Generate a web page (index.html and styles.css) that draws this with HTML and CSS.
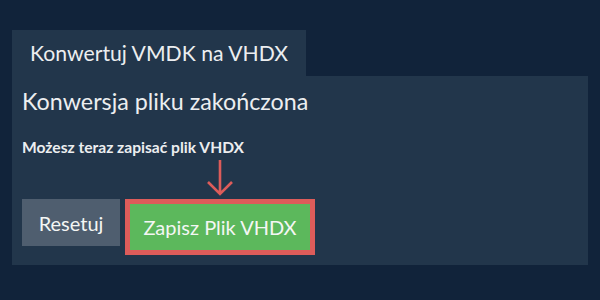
FILE: index.html
```html
<!DOCTYPE html>
<html lang="pl">
<head>
  <meta charset="UTF-8">
  <meta name="viewport" content="width=device-width, initial-scale=1.0">
  <title>Konwertuj VMDK na VHDX</title>
  <link rel="stylesheet" href="styles.css">
</head>
<body>
  <div class="converter">
    <div class="tab">Konwertuj VMDK na VHDX</div>
    <div class="panel">
      <h2 class="title">Konwersja pliku zakończona</h2>
      <p class="hint">Możesz teraz zapisać plik VHDX</p>
      <div class="actions">
        <button class="reset">Resetuj</button>
        <div class="save-wrap">
          <svg class="arrow" width="28" height="38" viewBox="0 0 28 38">
            <path d="M14 1 V35 M2 23 L14 35 L26 23" fill="none" stroke="#dd5c5a" stroke-width="2.6"/>
          </svg>
          <button class="save">Zapisz Plik VHDX</button>
        </div>
      </div>
    </div>
  </div>
</body>
</html>
```

FILE: styles.css
```css
body {
  margin: 0;
  background-color: #11233a;
  font-family: Lato, "Open Sans", sans-serif;
  color: #eceef0;
}

.converter {
  padding: 30px 12px 0 12px;
}

.tab {
  display: inline-block;
  height: 46px;
  line-height: 46px;
  padding: 0 18px;
  font-size: 21.2px;
  background: #22364b;
}

.panel {
  background: #22364b;
  padding: 11px 10px 10px 10px;
}

.title {
  margin: 0;
  font-size: 23.3px;
  font-weight: normal;
  line-height: 28px;
}

.hint {
  margin: 23px 0 0 0;
  font-size: 15.6px;
  font-weight: bold;
  line-height: 18px;
}

.actions {
  display: flex;
  align-items: flex-start;
  gap: 5px;
  margin-top: 43px;
}

button {
  font-family: Lato, "Open Sans", sans-serif;
  font-size: 20px;
  color: #f4f6f4;
  border: none;
  cursor: pointer;
}

.reset {
  width: 98px;
  height: 47px;
  background: #4f5e6f;
}

.save-wrap {
  position: relative;
}

.arrow {
  position: absolute;
  left: 81px;
  bottom: 100%;
  margin-bottom: 2px;
}

.save {
  width: 190px;
  height: 56px;
  background: #5cb85c;
  border: 5px solid #dd5c5a;
}
```
